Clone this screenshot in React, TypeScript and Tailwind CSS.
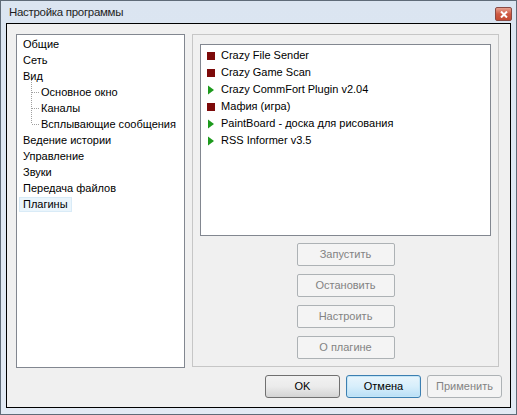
import type { ReactNode } from 'react'

type PluginState = 'stopped' | 'running'

interface Plugin {
  name: string
  state: PluginState
}

const plugins: Plugin[] = [
  { name: 'Crazy File Sender', state: 'stopped' },
  { name: 'Crazy Game Scan', state: 'stopped' },
  { name: 'Crazy CommFort Plugin v2.04', state: 'running' },
  { name: 'Мафия (игра)', state: 'stopped' },
  { name: 'PaintBoard - доска для рисования', state: 'running' },
  { name: 'RSS Informer v3.5', state: 'running' },
]

const font = { fontFamily: '"Liberation Sans", Arial, sans-serif' }

function StateIcon({ state }: { state: PluginState }) {
  if (state === 'stopped') {
    return <span className="block h-[8px] w-[8px] bg-[#7d0a0a]" />
  }
  return (
    <svg width="8" height="10" viewBox="0 0 8 10" className="block">
      <path d="M1 0.5 L7 5 L1 9.5 Z" fill="#1d9a1d" />
    </svg>
  )
}

// dotted connector used for nested tree rows
function TreeBranch({ last }: { last?: boolean }) {
  return (
    <svg width="14" height="16" viewBox="0 0 14 16" className="block shrink-0 overflow-visible" shapeRendering="crispEdges">
      <line x1="4.5" y1={-4} x2="4.5" y2={last ? 8 : 16} stroke="#a0a0a0" strokeDasharray="1 1" />
      <line x1="5" y1="8.5" x2="13" y2="8.5" stroke="#a0a0a0" strokeDasharray="1 1" />
    </svg>
  )
}

function TreeRow({ children, selected }: { children: ReactNode; selected?: boolean }) {
  return (
    <div className="flex h-[16px] items-center pl-[2px]">
      <span
        className={`flex h-[15px] items-center whitespace-nowrap border px-[3px] leading-none ${
          selected ? 'border-[#d9ebf7] bg-[#eaf5fc]' : 'border-transparent'
        }`}
      >
        {children}
      </span>
    </div>
  )
}

function ChildRow({ label, last }: { label: string; last?: boolean }) {
  return (
    <div className="flex h-[16px] items-center pl-[10px]">
      <TreeBranch last={last} />
      <span className="whitespace-nowrap leading-none">{label}</span>
    </div>
  )
}

function SideButton({ label }: { label: string }) {
  return (
    <div className="flex h-[23px] w-[98px] items-center justify-center rounded-[2px] border border-[#adb2b5] bg-[#f4f4f4] text-[#838383]">
      {label}
    </div>
  )
}

export default function App() {
  return (
    <div className="h-[415px] w-[517px] bg-white text-[11px] text-black" style={font}>
      <div className="flex h-full w-full flex-col border border-[#5f6b78] bg-gradient-to-b from-[#dbe5f1] to-[#e2eaf4]">
        <div className="flex h-[22px] items-center justify-between pl-[8px] pr-[4px]">
          <span className="pt-[1px] text-[11.5px] tracking-[-0.3px] text-[#1e1e1e]">Настройка программы</span>
          <div className="mt-[4px] flex h-[14px] w-[17px] items-center justify-center rounded-[2px] border border-[#8a4a44] bg-gradient-to-b from-[#e6a08f] via-[#cf5a43] to-[#c34a32]">
            <svg width="8" height="7" viewBox="0 0 8 7">
              <path d="M1 0.5 L7 6.5 M7 0.5 L1 6.5" stroke="white" strokeWidth="2" />
            </svg>
          </div>
        </div>

        <div className="mx-[5px] mb-[6px] flex flex-1 flex-col border border-black bg-[#f0f0f0]">
          <div className="flex gap-[7px] pl-[9px] pr-[11px] pt-[10px]">
            <div className="h-[334px] w-[169px] border border-[#828790] bg-white pt-[1px]">
              <TreeRow>Общие</TreeRow>
              <TreeRow>Сеть</TreeRow>
              <TreeRow>Вид</TreeRow>
              <ChildRow label="Основное окно" />
              <ChildRow label="Каналы" />
              <ChildRow label="Всплывающие сообщения" last />
              <TreeRow>Ведение истории</TreeRow>
              <TreeRow>Управление</TreeRow>
              <TreeRow>Звуки</TreeRow>
              <TreeRow>Передача файлов</TreeRow>
              <TreeRow selected>Плагины</TreeRow>
            </div>

            <div className="flex h-[333px] w-[307px] flex-col items-center border border-[#c6c6c6] px-[7px] pt-[9px]">
              <div className="h-[192px] w-full border border-[#828790] bg-white pt-[2px]">
                {plugins.map((plugin) => (
                  <div key={plugin.name} className="flex h-[17px] items-center gap-[6px] pl-[6px]">
                    <span className="flex w-[8px] justify-center">
                      <StateIcon state={plugin.state} />
                    </span>
                    <span className="whitespace-nowrap leading-none">{plugin.name}</span>
                  </div>
                ))}
              </div>
              <div className="mt-[7px] flex flex-col gap-[8px]">
                <SideButton label="Запустить" />
                <SideButton label="Остановить" />
                <SideButton label="Настроить" />
                <SideButton label="О плагине" />
              </div>
            </div>
          </div>

          <div className="mt-[7px] flex justify-end gap-[6px] pr-[8px]">
            <div className="flex h-[23px] w-[75px] items-center justify-center rounded-[3px] border border-[#707070] bg-gradient-to-b from-[#f2f2f2] via-[#ebebeb] to-[#d4d4d4]">
              OK
            </div>
            <div className="flex h-[23px] w-[75px] items-center justify-center rounded-[3px] border border-[#3c7fb1] bg-gradient-to-b from-[#e9f5fc] via-[#d7eefb] to-[#b9dff6] shadow-[inset_0_0_0_1px_#c4e5f6]">
              Отмена
            </div>
            <div className="flex h-[23px] w-[75px] items-center justify-center rounded-[3px] border border-[#adb2b5] bg-[#f4f4f4] text-[#838383]">
              Применить
            </div>
          </div>
        </div>
      </div>
    </div>
  )
}
